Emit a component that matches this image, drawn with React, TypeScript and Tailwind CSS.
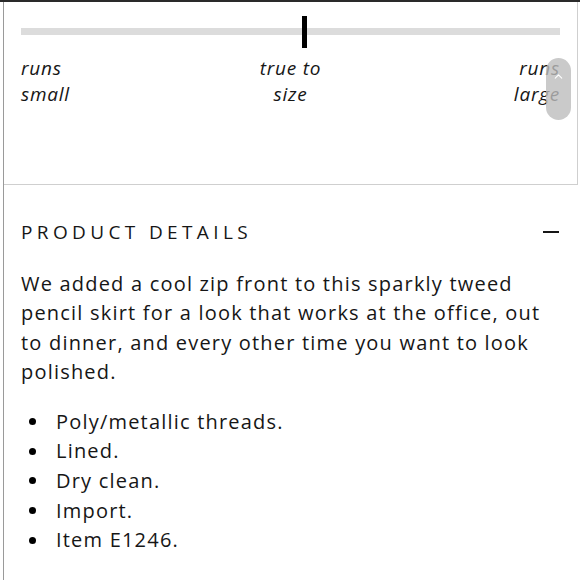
import { ChevronUp } from 'lucide-react'

const bullets = ['Poly/metallic threads.', 'Lined.', 'Dry clean.', 'Import.', 'Item E1246.']

export default function App() {
  return (
    <div className="w-[580px] h-[580px] overflow-hidden bg-white text-[#161616] font-['Open_Sans',sans-serif] border-t-2 border-[#2a2a2a]">
      <div className="h-full ml-[3px] border-l border-[#9a9a9a] flex flex-col">
        {/* Fit scale */}
        <div className="relative h-[183px] border-r border-b border-[#cfcfcf] mr-[2px] rounded-tl-md">
          <div className="relative mx-[17px] mt-[26px] h-[7px] bg-[#dcdcdc]">
            <div className="absolute left-[281px] -top-[12px] w-[5px] h-[32px] bg-black" />
          </div>
          <div className="flex justify-between px-[17px] mt-[20px] text-[19px] leading-[26px] italic tracking-[0.04em]">
            <div className="w-[80px]">runs<br />small</div>
            <div className="text-center">true to<br />size</div>
            <div className="w-[80px] text-right">runs<br />large</div>
          </div>
          <div className="absolute left-[542px] top-[56px] w-[25px] h-[62px] rounded-full bg-[#bdbdbd]/80 flex justify-center pt-[12px]">
            <ChevronUp size={13} strokeWidth={2} className="text-white" />
          </div>
        </div>

        {/* Product details */}
        <div className="px-[17px] pt-[33px]">
          <div className="flex items-center justify-between">
            <h2 className="text-[19px] tracking-[0.23em] uppercase">Product Details</h2>
            <div className="w-[16px] h-[2px] bg-[#161616] mr-[4px]" />
          </div>
          <p className="mt-[22px] max-w-[525px] text-[20px] leading-[29.5px] tracking-[0.06em]">
            We added a cool zip front to this sparkly tweed pencil skirt for a look that works at the office, out to dinner, and every other time you want to look polished.
          </p>
          <ul className="mt-[20px] text-[20px] leading-[29.7px] tracking-[0.06em]">
            {bullets.map((b) => (
              <li key={b} className="flex items-center">
                <span className="w-[7px] h-[7px] rounded-full bg-black ml-[8px] mr-[20px]" />
                {b}
              </li>
            ))}
          </ul>
        </div>
      </div>
    </div>
  )
}
